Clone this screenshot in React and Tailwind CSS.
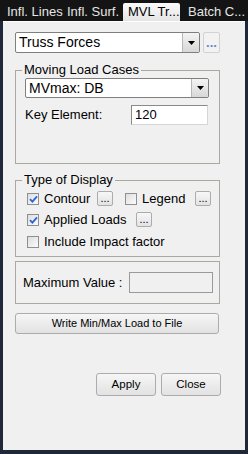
import React from 'react';

function Check({ checked }) {
    return (
        <span className="w-[12px] h-[12px] shrink-0 border border-[#8e8f8f] bg-linear-to-br from-[#dedede] to-[#fbfbfb] flex items-center justify-center">
            {checked && (
                <svg width="9" height="8" viewBox="0 0 9 8">
                    <path d="M1 4.2 L3.4 6.6 L8 1.4" fill="none" stroke="#2c64d6" strokeWidth="1.8" />
                </svg>
            )}
        </span>
    );
}

function Dots({ className = '' }) {
    return (
        <span className={`w-[16px] h-[15px] shrink-0 border border-[#acacac] rounded-[2px] bg-linear-to-b from-[#f7f7f7] to-[#e3e3e3] flex items-end justify-center text-[11px] leading-[12px] pb-[1px] text-black ${className}`}>
            ...
        </span>
    );
}

function Combo({ text, className = '' }) {
    return (
        <div className={`flex border border-[#7f7f7f] rounded-[2px] bg-white ${className}`}>
            <span className="flex-1 pl-[3px] text-[14px] leading-[19px] text-black">{text}</span>
            <span className="w-[17px] border-l border-[#b8b8b8] rounded-r-[2px] bg-linear-to-b from-[#f4f4f4] to-[#d8d8d8] flex items-center justify-center">
                <svg width="7" height="4" viewBox="0 0 7 4">
                    <path d="M0 0 H7 L3.5 4 Z" fill="#000" />
                </svg>
            </span>
        </div>
    );
}

function Group({ title, className = '', children }) {
    return (
        <div className={`w-[205px] ml-[12px] border border-[#aaa89f] flex flex-col ${className}`}>
            <span className="self-start -mt-[9px] ml-[6px] px-[2px] bg-[#f0f0f0] text-[13px] leading-[16px] text-black">{title}</span>
            {children}
        </div>
    );
}

function Btn({ children, className = '' }) {
    return (
        <span className={`border border-[#acacac] rounded-[3px] bg-linear-to-b from-[#f6f6f6] to-[#e2e2e2] flex items-center justify-center text-black ${className}`}>
            {children}
        </span>
    );
}

export default function App() {
    return (
        <div className="w-[248px] h-[454px] bg-[#1e2838] flex flex-col font-['Liberation_Sans',Arial,sans-serif] overflow-hidden">
            {/* tabs */}
            <div className="h-[21px] bg-[#141414] flex items-end text-[13px] text-[#e6e6e6] shrink-0">
                <span className="w-[67px] pl-[7px] h-[18px] leading-[18px]">Infl. Lines</span>
                <span className="w-[56px] h-[18px] leading-[18px]">Infl. Surf.</span>
                <span className="w-[57px] h-[18px] leading-[18px] pl-[5px] rounded-t-[2px] bg-linear-to-b from-[#fbfbfb] to-[#e4e4e4] text-black">MVL Tr...</span>
                <span className="pl-[8px] h-[18px] leading-[18px]">Batch C...</span>
            </div>

            {/* panel */}
            <div className="ml-[3px] mr-[3px] mb-[4px] flex-1 bg-[#f0f0f0] border-t border-white flex flex-col">
                <div className="flex ml-[12px] mt-[10px] gap-[3px]">
                    <Combo text="Truss Forces" className="w-[185px] h-[21px]" />
                    <span className="w-[17px] h-[21px] border border-[#d2d2d2] rounded-[2px] bg-[#f2f2f2] flex items-end justify-center pb-[4px] text-[13px] leading-[10px] font-bold text-[#6a86c8]">...</span>
                </div>

                <Group title="Moving Load Cases" className="mt-[17px] h-[94px]">
                    <Combo text="MVmax: DB" className="ml-[9px] w-[184px] h-[20px]" />
                    <div className="flex items-center ml-[9px] mt-[7px]">
                        <span className="w-[106px] text-[13px] text-black">Key Element:</span>
                        <span className="w-[77px] h-[20px] border border-[#8a8a8a] border-b-[#d6d6d6] border-r-[#d6d6d6] bg-white pl-[3px] text-[13px] leading-[18px] text-black">120</span>
                    </div>
                </Group>

                <Group title="Type of Display" className="mt-[16px] h-[77px]">
                    <div className="flex items-center ml-[11px] mt-[3px] h-[15px] text-[13px] text-black">
                        <Check checked />
                        <span className="ml-[5px] w-[53px]">Contour</span>
                        <Dots />
                        <span className="w-[12px]" />
                        <Check />
                        <span className="ml-[5px] w-[53px]">Legend</span>
                        <Dots />
                    </div>
                    <div className="flex items-center ml-[11px] mt-[6px] h-[15px] text-[13px] text-black">
                        <Check checked />
                        <span className="ml-[5px] w-[92px]">Applied Loads</span>
                        <Dots />
                    </div>
                    <div className="flex items-center ml-[11px] mt-[7px] h-[15px] text-[13px] text-black">
                        <Check />
                        <span className="ml-[5px]">Include Impact factor</span>
                    </div>
                </Group>

                <div className="w-[205px] ml-[12px] mt-[4px] h-[43px] border border-[#aaa89f] flex items-center">
                    <span className="ml-[7px] w-[106px] text-[13px] text-black">Maximum Value :</span>
                    <span className="w-[84px] h-[21px] border border-[#9a9a9a] bg-[#f0f0f0]" />
                </div>

                <Btn className="ml-[12px] mt-[9px] w-[204px] h-[21px] text-[11px]">Write Min/Max Load to File</Btn>

                <div className="flex ml-[93px] mt-[39px] gap-[5px]">
                    <Btn className="w-[60px] h-[23px] text-[11.5px]">Apply</Btn>
                    <Btn className="w-[60px] h-[23px] text-[11.5px]">Close</Btn>
                </div>
            </div>
        </div>
    );
}
